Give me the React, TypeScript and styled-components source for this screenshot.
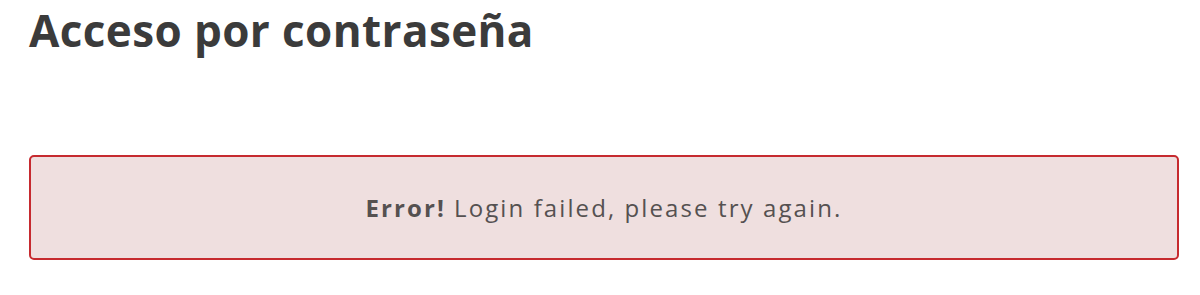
import React from "react";
import styled, { createGlobalStyle } from "styled-components";

const Global = createGlobalStyle`
  html, body { margin: 0; padding: 0; background: #ffffff; }
  body { font-family: "Open Sans", "DejaVu Sans", sans-serif; }
`;

const Page = styled.main`
  display: flex;
  flex-direction: column;
  padding: 0 21px 0 29px;
`;

const Title = styled.h1`
  margin: 0;
  padding-top: 0;
  font-family: "Open Sans", sans-serif;
  font-weight: 700;
  font-size: 44px;
  line-height: 60px;
  color: #3b3b3b;
  letter-spacing: 0.4px;
`;

const Alert = styled.div`
  margin-top: 95px;
  height: 105px;
  box-sizing: border-box;
  border: 2px solid #c62a2f;
  border-radius: 5px;
  background: #efdfdf;
  display: flex;
  align-items: center;
  justify-content: center;
  font-family: "Open Sans", sans-serif;
  font-size: 24px;
  letter-spacing: 2.1px;
  color: #555151;
`;

const Strong = styled.strong`
  font-weight: 700;
  margin-right: 8px;
`;

export default function App() {
  return (
    <>
      <Global />
      <Page>
        <Title>Acceso por contraseña</Title>
        <Alert role="alert">
          <Strong>Error!</Strong>
          Login failed, please try again.
        </Alert>
      </Page>
    </>
  );
}
